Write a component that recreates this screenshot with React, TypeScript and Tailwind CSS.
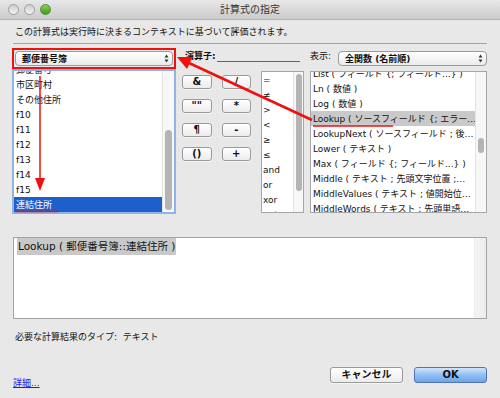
import React from 'react';

const fieldItems = ['郵便番号', '市区町村', 'その他住所', 'f10', 'f11', 'f12', 'f13', 'f14', 'f15', '連結住所'];
const opItems = ['=', '≠', '>', '<', '≥', '≤', 'and', 'or', 'xor', 'not'];
const funcItems = [
  'List ( フィールド {; フィールド...} )',
  'Ln ( 数値 )',
  'Log ( 数値 )',
  'Lookup ( ソースフィールド {; エラー…',
  'LookupNext ( ソースフィールド ; 後…',
  'Lower ( テキスト )',
  'Max ( フィールド {; フィールド...} )',
  'Middle ( テキスト ; 先頭文字位置 ;…',
  'MiddleValues ( テキスト ; 値開始位…',
  'MiddleWords ( テキスト ; 先頭単語…',
];
const opButtons = ['&', '/', '""', '*', '¶', '-', '()', '+'];

// 上下の小さな三角（ポップアップメニューの矢印）
const PopupArrows = () => (
  <svg width="5" height="9" viewBox="0 0 5 9" className="shrink-0">
    <path d="M2.5 0.5 L4.5 3.5 L0.5 3.5 Z" fill="#333" />
    <path d="M2.5 8.5 L4.5 5.5 L0.5 5.5 Z" fill="#333" />
  </svg>
);

const AquaButton = ({ label, className = '' }: { label: string; className?: string }) => (
  <div
    className={`flex items-center justify-center rounded-[3px] border border-[#9a9a9a] bg-gradient-to-b from-white to-[#ececec] shadow-[0_1px_0_rgba(255,255,255,0.6)] font-bold text-[#111] ${className}`}
  >
    {label}
  </div>
);

export default function App() {
  return (
    <div className="relative w-[500px] h-[398px] overflow-hidden bg-[#e8e8e8] font-['DejaVu_Sans','Noto_Sans_CJK_JP',sans-serif] text-[9px] leading-[12px] text-[#111]">
      {/* タイトルバー */}
      <div className="relative h-[20px] bg-gradient-to-b from-[#e8e8e8] to-[#cbcbcb] border-b border-[#b3b3b3] flex items-center pl-[8px] gap-[5px]">
        <div className="w-[11px] h-[11px] rounded-full border border-[#9d9d9d] bg-gradient-to-b from-[#cfcfcf] to-[#f2f2f2]" />
        <div className="w-[11px] h-[11px] rounded-full border border-[#9d9d9d] bg-gradient-to-b from-[#cfcfcf] to-[#f2f2f2]" />
        <div className="w-[11px] h-[11px] rounded-full border border-[#4f8a2e] bg-gradient-to-b from-[#8ccf5a] to-[#3f9b1e]" />
        <div className="absolute inset-0 flex items-center justify-center text-[10px] text-[#333]">計算式の指定</div>
      </div>

      {/* 説明 */}
      <div className="pt-[6px] px-[15px]">この計算式は実行時に決まるコンテキストに基づいて評価されます。</div>
      <div className="mx-[13px] mt-[5px] border-t border-[#a3a3a3]" />

      {/* メインエリア */}
      <div className="mt-[4px] px-[12px] flex gap-[6px]">
        {/* フィールド */}
        <div className="w-[164px] flex flex-col">
          <div className="h-[21px] border-2 border-[#f01010] p-px">
            <div className="h-[15px] rounded-[4px] border border-[#9a9a9a] bg-gradient-to-b from-white to-[#ebebeb] flex items-center justify-between pl-[6px] pr-[3px] font-bold">
              <span>郵便番号簿</span>
              <PopupArrows />
            </div>
          </div>
          <div className="h-[145px] border-2 border-[#8fb3e6] bg-white flex">
            <div className="flex-1 flex flex-col justify-end overflow-hidden">
              {fieldItems.map((f, i) => (
                <div
                  key={f}
                  className={`h-[15px] shrink-0 pl-[2px] flex items-center whitespace-nowrap ${i === fieldItems.length - 1 ? 'bg-[#1e5fcc] text-white' : ''}`}
                >
                  {f}
                </div>
              ))}
            </div>
            <div className="w-[12px] bg-[#f7f7f7] border-l border-[#e3e3e3] flex justify-center">
              <div className="mt-[59px] w-[7px] h-[80px] rounded-full bg-[#b4b4b4]" />
            </div>
          </div>
        </div>

        {/* 演算子 */}
        <div className="w-[122px] flex flex-col">
          <div className="h-[23px] pl-[3px] pt-[2px] flex items-start">
            <span className="font-bold">演算子:</span>
            <div className="flex-1 h-[12px] border-b border-[#666] ml-[1px] mr-[4px]" />
          </div>
          <div className="flex">
            <div className="w-[69px] pt-[4px] grid grid-cols-2 gap-x-[10px] gap-y-[10px] content-start">
              {opButtons.map((b) => (
                <AquaButton key={b} label={b} className="h-[14px] text-[10px]" />
              ))}
            </div>
            <div className="ml-[10px] w-[43px] h-[142px] border border-[#a6a6a6] bg-white flex">
              <div className="flex-1 overflow-hidden">
                {opItems.map((o) => (
                  <div key={o} className="h-[15px] pl-[1px] flex items-center">
                    {o}
                  </div>
                ))}
              </div>
              <div className="w-[10px] bg-[#f7f7f7] border-l border-[#e3e3e3] flex justify-center">
                <div className="mt-[2px] w-[6px] h-[117px] rounded-full bg-[#b4b4b4]" />
              </div>
            </div>
          </div>
        </div>

        {/* 関数 */}
        <div className="w-[177px] flex flex-col">
          <div className="h-[23px] flex items-start">
            <span className="pt-[2px] w-[28px]">表示:</span>
            <div className="mt-[3px] flex-1 h-[15px] rounded-[4px] border border-[#9a9a9a] bg-gradient-to-b from-white to-[#ebebeb] flex items-center justify-between pl-[6px] pr-[3px] font-bold">
              <span>全関数 (名前順)</span>
              <PopupArrows />
            </div>
          </div>
          <div className="h-[142px] border border-[#a6a6a6] bg-white flex">
            <div className="flex-1 overflow-hidden">
              <div className="-mt-[6px]">
                {funcItems.map((f) => (
                  <div
                    key={f}
                    className={`h-[15px] pl-[2px] flex items-center whitespace-nowrap overflow-hidden ${f.startsWith('Lookup (') ? 'bg-[#c9c9c9]' : ''}`}
                  >
                    {f}
                  </div>
                ))}
              </div>
            </div>
            <div className="w-[11px] bg-[#f7f7f7] border-l border-[#e3e3e3] flex justify-center">
              <div className="mt-[66px] w-[6px] h-[15px] rounded-full bg-[#b4b4b4]" />
            </div>
          </div>
        </div>
      </div>

      {/* 計算式 */}
      <div className="mt-[23px] px-[13px]">
        <div className="h-[82px] border border-[#a3a3a3] bg-white flex">
          <div className="flex-1 pl-[3px]">
            <span className="inline-block bg-[#c9c9c9] text-[10.5px] leading-[17px] px-px">Lookup ( 郵便番号簿::連結住所 )</span>
          </div>
          <div className="w-[12px] bg-gradient-to-r from-[#f4f4f4] to-[#ececec] border-l border-[#ececec]" />
        </div>
      </div>

      <div className="mt-[12px] px-[15px]">必要な計算結果のタイプ:&nbsp; テキスト</div>

      {/* ボタン */}
      <div className="mt-[24px] pl-[13px] pr-[13px] flex items-start">
        <span className="mt-[10px] text-[#1a1aee] underline">詳細...</span>
        <div className="flex-1" />
        <AquaButton label="キャンセル" className="w-[73px] h-[16px] text-[10px]" />
        <div className="ml-[11px] w-[73px] h-[16px] rounded-[3px] border border-[#5275b0] bg-gradient-to-b from-[#d2e4fa] via-[#92bff2] to-[#6aa6ec] flex items-center justify-center font-bold text-[10px]">
          OK
        </div>
      </div>

      {/* 赤い矢印（注釈） */}
      <svg className="absolute inset-0 pointer-events-none" width="500" height="398" viewBox="0 0 500 398">
        <line x1="312" y1="120" x2="189" y2="63" stroke="#f01010" strokeWidth="2.5" />
        <polygon points="177,57 192.5,57 187,69" fill="#f01010" />
        <line x1="40" y1="76" x2="40" y2="181" stroke="#f01010" strokeWidth="1.5" />
        <polygon points="35,178 45,178 40,191" fill="#f01010" />
        <line x1="15" y1="211.5" x2="58" y2="211.5" stroke="#f01010" strokeWidth="1.5" />
        <line x1="313" y1="126" x2="393" y2="126" stroke="#f01010" strokeWidth="1.5" />
      </svg>
    </div>
  );
}
